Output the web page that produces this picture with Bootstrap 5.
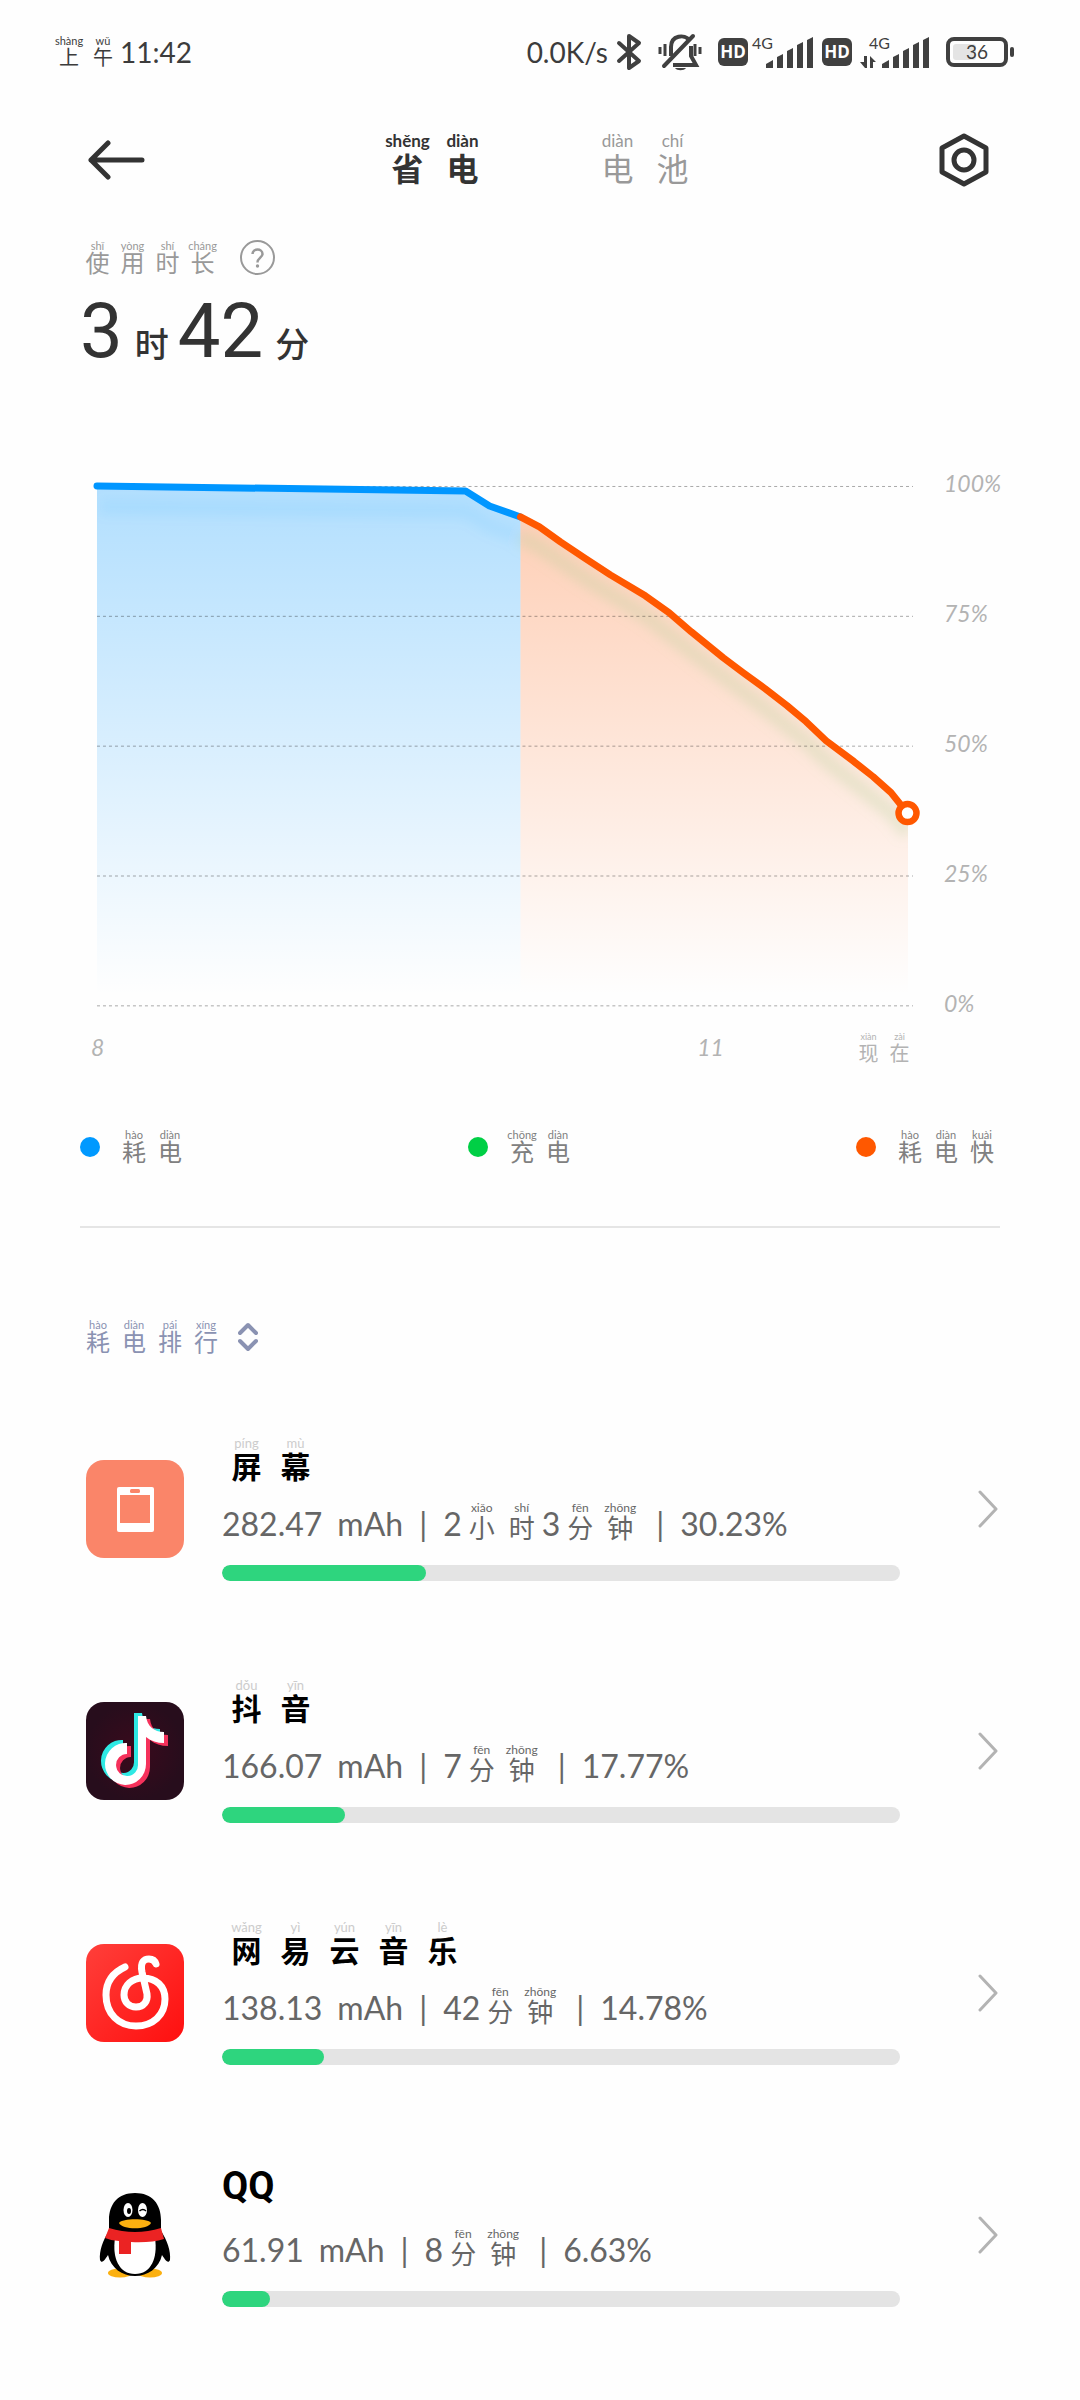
<!DOCTYPE html>
<html lang="zh-CN">
<head>
<meta charset="utf-8">
<meta name="viewport" content="width=device-width, initial-scale=1">
<title>省电</title>
<link href="https://cdn.jsdelivr.net/npm/bootstrap@5.3.0/dist/css/bootstrap.min.css" rel="stylesheet">
<style>
body{font-family:Lato,"Noto Sans CJK SC",sans-serif;color:#333;background:#fefefe;line-height:1}
svg{display:block;flex:none}
a,a:hover{text-decoration:none;color:inherit}
.bare{border:0;background:none;padding:0;color:inherit;font:inherit}
.side{padding-left:80px;padding-right:80px}

/* hanzi with pinyin above */
ruby{display:flex;flex-direction:column-reverse;align-items:center;width:36px;font-size:24px;line-height:24px}
rt{display:block;font-size:11px;line-height:10px;white-space:nowrap}
.zh-status ruby{width:34px;font-size:20px;line-height:22px}
.zh-tab ruby{width:55px;font-size:32px;line-height:38px}
.zh-tab rt{font-size:17px;line-height:18px}
.zh-usage ruby{width:35px}
.zh-axis ruby{width:31px;font-size:20px;line-height:22px}
.zh-axis rt{font-size:9px}
.zh-title ruby{width:49px;font-size:30px;line-height:34px}
.zh-title rt{font-size:13px;line-height:12px;font-weight:400;color:#ccc}
.zh-time ruby{width:40px;font-size:26px;line-height:28px}
.zh-time rt{font-size:12px;line-height:12px}

.status{height:104px;padding:0 66px 0 52px;font-size:28px;color:#3c3c3c}
.status svg{overflow:visible}
.hd-tag{width:30px;height:28px;border-radius:6px;background:#404040;color:#fff;font:700 17px/28px "Open Sans",sans-serif;text-align:center}
.topbar{height:112px;padding:0 87px}
.tabs{gap:100px}
.tab-off{color:#999}
.side-btn{width:58px}
.usage{padding-top:24px;color:#999;gap:20px}
.clock{margin-top:16px;font:400 76px/80px Roboto,sans-serif}
.clock small{font:500 34px/40px "Noto Sans CJK SC",sans-serif;margin:0 9px 0 12px}
.chart{margin-top:99px;padding-left:91px;padding-right:70px;color:#b3b3b3;font-size:23px;font-style:italic}
.plot svg{width:100%;height:auto}
.y-axis{width:66px;margin-left:22px;line-height:26px}
.x-axis{display:grid;grid-template-columns:607fr 156fr 62fr;padding-right:7px;margin-top:17px;line-height:30px}
.x-axis ruby{font-style:normal}
.x-axis .zh-axis{justify-content:flex-end}
.legend{margin-top:66px;color:#808080}
.dot{width:20px;height:20px}
.blue{background:#0099ff}.green{background:#00cf45}.orange{background:#ff5800}
.rule{margin:62px 80px 92px;border:0;border-top:2px solid #e5e5e5;opacity:1}
.sort{color:#8a92b2;gap:14px}
.rank{margin:34px 0 0}
.app{height:242px;padding:0 82px 0 86px}
.app-body{margin:0 78px 0 38px}
.app-name{height:46px;color:#000;font-weight:700}
.latin{font:700 38px/46px Roboto,sans-serif}
.detail{margin-top:19px;height:40px;font-size:32px;line-height:36px;color:#666}
.unit{margin-left:15px}
.bar-sep{width:40px;text-align:center}
.meter{height:16px;margin-top:23px;background:#e4e4e4}
.meter .progress-bar{background:#2ed57e}
</style>
<script src="https://cdn.jsdelivr.net/npm/bootstrap@5.3.0/dist/js/bootstrap.bundle.min.js"></script>
</head>
<body>

<div class="status d-flex align-items-center justify-content-between">
  <div class="d-flex align-items-center zh-status">
    <ruby>上<rt>shàng</rt></ruby><ruby>午<rt>wǔ</rt></ruby><span>11:42</span>
  </div>
  <div class="d-flex align-items-center">
    <span>0.0K/s</span>
    <svg class="ms-2" width="26" height="40" viewBox="0 0 26 40" fill="none" stroke="#404040" stroke-width="4" stroke-linejoin="round" stroke-linecap="round"><path d="M3 11 L23 29 L13 36 V4 L23 11 L3 29"/></svg>
    <svg class="ms-3" width="44" height="40" viewBox="0 0 44 40" fill="none" stroke="#404040" stroke-width="4"><path d="M2 15v7M7 12v12M37 12v12M42 15v7" stroke-width="3"/><path d="M13 24V15C13 3 27 2 31 8M33 14V24L38 33H15"/><path d="M6 34L35 4" stroke-linecap="round"/><path d="M17 36H28C26 39 19 39 17 36Z" fill="#404040" stroke="none"/></svg>
    <span class="hd-tag ms-3">HD</span>
    <svg class="ms-1" width="62" height="38" viewBox="0 -2 62 38" fill="#404040"><text x="0" y="14" font-size="16">4G</text><path d="M14 33V29L21 25V33ZM25 33V22L31 19V33ZM35 33V16L41 13V33ZM45 33V10L51 7V33ZM55 33V5L61 2V33Z"/></svg>
    <span class="hd-tag ms-2">HD</span>
    <svg class="ms-2" width="70" height="38" viewBox="0 -2 70 38" fill="#404040"><text x="9" y="14" font-size="16">4G</text><path d="M0 27H4V21H7V33H5ZM10 33V21L16 27H13V33Z"/><path d="M22 33V29L29 25V33ZM33 33V22L39 19V33ZM43 33V16L49 13V33ZM53 33V10L59 7V33ZM63 33V5L69 2V33Z"/></svg>
    <svg class="ms-3" width="68" height="30" viewBox="0 0 68 30"><rect x="2" y="2" width="58" height="26" rx="6" fill="none" stroke="#404040" stroke-width="4"/><rect x="7" y="7" width="23" height="16" rx="3" fill="#e4e4e4"/><rect x="64" y="10" width="4" height="10" rx="2" fill="#404040"/><text x="31" y="22" font-size="19" text-anchor="middle" fill="#404040">36</text></svg>
  </div>
</div>

<header class="topbar d-flex align-items-center justify-content-between">
  <button class="bare side-btn" aria-label="返回"><svg width="58" height="40" viewBox="0 0 58 40" fill="none" stroke="#333" stroke-width="5" stroke-linecap="round" stroke-linejoin="round"><path d="M55 20H4M21 3L4 20L21 37"/></svg></button>
  <nav class="tabs d-flex">
    <a href="#saver" class="zh-tab d-flex fw-bold"><ruby>省<rt>shěng</rt></ruby><ruby>电<rt>diàn</rt></ruby></a>
    <a href="#battery" class="zh-tab d-flex tab-off"><ruby>电<rt>diàn</rt></ruby><ruby>池<rt>chí</rt></ruby></a>
  </nav>
  <button class="bare side-btn d-flex justify-content-center" aria-label="设置"><svg width="50" height="54" viewBox="0 0 50 54" fill="none" stroke="#333" stroke-width="5" stroke-linejoin="round"><path d="M25 3L47 15V39L25 51L3 39V15Z"/><circle cx="25" cy="27" r="10"/></svg></button>
</header>

<main>
  <section class="side">
    <div class="usage d-flex align-items-center">
      <div class="zh-usage d-flex"><ruby>使<rt>shǐ</rt></ruby><ruby>用<rt>yòng</rt></ruby><ruby>时<rt>shí</rt></ruby><ruby>长<rt>cháng</rt></ruby></div>
      <button class="bare" aria-label="说明"><svg width="35" height="35" viewBox="0 0 35 35" fill="none" stroke="#999" stroke-width="2"><circle cx="17.500" cy="17.500" r="16.500"/><path d="M12.500 14C12.500 8 22.500 8 22.500 14C22.500 17.500 17.500 18 17.500 22.500" stroke-width="2.500"/><circle cx="17.500" cy="26" r="1.700" fill="#999" stroke="none"/></svg></button>
    </div>
    <div class="clock d-flex align-items-baseline">3<small>时</small>42<small>分</small></div>
  </section>

  <section class="chart d-flex">
    <div class="plot flex-grow-1">
      <svg viewBox="91 470 832 546" role="img" aria-label="电量曲线">
        <defs>
          <linearGradient id="gb" gradientUnits="userSpaceOnUse" x1="0" y1="486" x2="0" y2="996"><stop offset="0" stop-color="#0096ff" stop-opacity=".3"/><stop offset="1" stop-color="#0096ff" stop-opacity="0"/></linearGradient>
          <linearGradient id="go" gradientUnits="userSpaceOnUse" x1="0" y1="486" x2="0" y2="996"><stop offset="0" stop-color="#ff5800" stop-opacity=".3"/><stop offset="1" stop-color="#ff5800" stop-opacity="0"/></linearGradient>
          <filter id="soft" filterUnits="userSpaceOnUse" x="60" y="440" width="900" height="460"><feGaussianBlur stdDeviation="6"/></filter>
          <clipPath id="area"><path d="M97 486L466 491L490 506L521 517L540 527L561 542L585 558L611 575L646 596L670 613L692 632L724 658L766 689L807 722L827 741L855 762L892 793L909 814V1006H97Z"/></clipPath>
        </defs>
        <path fill="url(#gb)" d="M97 486L466 491L490 506L521 517V1006H97Z"/>
        <path fill="url(#go)" d="M521 517L540 527L561 542L585 558L611 575L646 596L670 613L692 632L724 658L766 689L807 722L827 741L855 762L892 793L909 814V1006H521Z"/>
        <g clip-path="url(#area)"><g filter="url(#soft)" fill="none" stroke-width="15" transform="translate(0 20)">
          <path stroke="#0096ff" stroke-opacity=".07" d="M100 487L466 491L490 506L521 517"/>
          <path stroke="#b0d098" stroke-opacity=".28" d="M521 517L540 527L585 558L646 596L692 632L766 689L807 722L827 741L892 793L909 814"/>
        </g></g>
        <g stroke="#000" stroke-opacity=".34" stroke-dasharray="3 3"><path d="M97 486.500H914M97 616.500H914M97 746.500H914M97 876.500H914M97 1006.500H914"/></g>
        <g fill="none" stroke-width="7" stroke-linecap="round" stroke-linejoin="round">
          <path stroke="#0096ff" d="M97 486L466 491L490 506L521 517"/>
          <path stroke="#ff5800" d="M521 517L540 527L561 542L585 558L611 575L646 596L670 613L692 632L724 658L744 673L766 689L788 706L807 722L827 741L855 762L874 777L892 793L908 813"/>
        </g>
        <circle cx="908.500" cy="813.500" r="9" fill="#fff" stroke="#ff5800" stroke-width="6.500"/>
      </svg>
      <div class="x-axis"><span>8</span><span>11</span><span class="zh-axis d-flex"><ruby>现<rt>xiàn</rt></ruby><ruby>在<rt>zài</rt></ruby></span></div>
    </div>
    <div class="y-axis flex-shrink-0"><div class="d-flex flex-column justify-content-between h-100 pb-5"><span>100%</span><span>75%</span><span>50%</span><span>25%</span><span>0%</span></div></div>
  </section>

  <section class="legend side d-flex justify-content-between">
    <div class="d-flex align-items-center gap-3"><span class="dot blue rounded-circle"></span><span class="d-flex"><ruby>耗<rt>hào</rt></ruby><ruby>电<rt>diàn</rt></ruby></span></div>
    <div class="d-flex align-items-center gap-3"><span class="dot green rounded-circle"></span><span class="d-flex"><ruby>充<rt>chōng</rt></ruby><ruby>电<rt>diàn</rt></ruby></span></div>
    <div class="d-flex align-items-center gap-3"><span class="dot orange rounded-circle"></span><span class="d-flex"><ruby>耗<rt>hào</rt></ruby><ruby>电<rt>diàn</rt></ruby><ruby>快<rt>kuài</rt></ruby></span></div>
  </section>

  <hr class="rule">

  <div class="side">
    <button class="bare sort d-flex align-items-center">
      <span class="d-flex"><ruby>耗<rt>hào</rt></ruby><ruby>电<rt>diàn</rt></ruby><ruby>排<rt>pái</rt></ruby><ruby>行<rt>xíng</rt></ruby></span>
      <svg width="20" height="30" viewBox="0 0 20 30" fill="none" stroke="#8a92b2" stroke-width="4" stroke-linecap="round" stroke-linejoin="round"><path d="M2 11L10 3L18 11M2 19L10 27L18 19"/></svg>
    </button>
  </div>

  <ul class="rank list-unstyled">
    <li><a href="#screen" class="app d-flex align-items-center">
      <svg width="98" height="98" viewBox="0 0 98 98"><rect width="98" height="98" rx="18" fill="#fa8569"/><rect x="31" y="27" width="37" height="45" rx="2" fill="#fff"/><rect x="34" y="35" width="30" height="28" fill="#fa8569"/><rect x="44" y="29" width="10" height="4" rx="1.500" fill="#fa8569"/></svg>
      <div class="app-body flex-grow-1">
        <div class="app-name zh-title d-flex"><ruby>屏<rt>píng</rt></ruby><ruby>幕<rt>mù</rt></ruby></div>
        <div class="detail zh-time d-flex align-items-end"><span>282.47</span><span class="unit">mAh</span><span class="bar-sep">|</span><span>2</span><ruby>小<rt>xiǎo</rt></ruby><ruby>时<rt>shí</rt></ruby><span>3</span><ruby>分<rt>fēn</rt></ruby><ruby>钟<rt>zhōng</rt></ruby><span class="bar-sep">|</span><span>30.23%</span></div>
        <div class="meter progress rounded-pill"><div class="progress-bar rounded-pill" style="width:30.1%"></div></div>
      </div>
      <svg width="20" height="38" viewBox="0 0 20 38" fill="none" stroke="#b3b3b3" stroke-width="3" stroke-linecap="round" stroke-linejoin="round"><path d="M2 2L18 19L2 36"/></svg>
    </a></li>
    <li><a href="#douyin" class="app d-flex align-items-center">
      <svg width="98" height="98" viewBox="0 0 98 98"><defs><radialGradient id="dk"><stop offset="0" stop-color="#3a0a1c"/><stop offset="1" stop-color="#270d1c"/></radialGradient><path id="note" d="M52 14H60C61 24 68 30 78 30V41C71 41 65 39 60 35V62A20.500 21 0 1 1 41 41V52A11 11 0 1 0 52 62Z"/></defs><rect width="98" height="98" rx="18" fill="url(#dk)"/><use href="#note" x="-4" y="-3" fill="#2ee9e4"/><use href="#note" x="4" y="3" fill="#f5315b"/><use href="#note" fill="#fff"/></svg>
      <div class="app-body flex-grow-1">
        <div class="app-name zh-title d-flex"><ruby>抖<rt>dǒu</rt></ruby><ruby>音<rt>yīn</rt></ruby></div>
        <div class="detail zh-time d-flex align-items-end"><span>166.07</span><span class="unit">mAh</span><span class="bar-sep">|</span><span>7</span><ruby>分<rt>fēn</rt></ruby><ruby>钟<rt>zhōng</rt></ruby><span class="bar-sep">|</span><span>17.77%</span></div>
        <div class="meter progress rounded-pill"><div class="progress-bar rounded-pill" style="width:18.1%"></div></div>
      </div>
      <svg width="20" height="38" viewBox="0 0 20 38" fill="none" stroke="#b3b3b3" stroke-width="3" stroke-linecap="round" stroke-linejoin="round"><path d="M2 2L18 19L2 36"/></svg>
    </a></li>
    <li><a href="#music" class="app d-flex align-items-center">
      <svg width="98" height="98" viewBox="0 0 98 98"><defs><linearGradient id="rd" x1="0" y1="0" x2="1" y2="1"><stop offset="0" stop-color="#ff3f3a"/><stop offset="1" stop-color="#ff0f0f"/></linearGradient></defs><rect width="98" height="98" rx="18" fill="url(#rd)"/><path d="M39 23C26 29 20 39 20 51C20 70 33 82 50 82C67 82 79 71 79 55C79 42 70 34 57 34C46 34 38 41 38 51C38 58 43 63 50 63C58 63 62 57 61 50L56 28C54 18 58 15 63 15C67 15 69 17 70 20" fill="none" stroke="#fff" stroke-width="7" stroke-linecap="round"/></svg>
      <div class="app-body flex-grow-1">
        <div class="app-name zh-title d-flex"><ruby>网<rt>wǎng</rt></ruby><ruby>易<rt>yì</rt></ruby><ruby>云<rt>yún</rt></ruby><ruby>音<rt>yīn</rt></ruby><ruby>乐<rt>lè</rt></ruby></div>
        <div class="detail zh-time d-flex align-items-end"><span>138.13</span><span class="unit">mAh</span><span class="bar-sep">|</span><span>42</span><ruby>分<rt>fēn</rt></ruby><ruby>钟<rt>zhōng</rt></ruby><span class="bar-sep">|</span><span>14.78%</span></div>
        <div class="meter progress rounded-pill"><div class="progress-bar rounded-pill" style="width:15.1%"></div></div>
      </div>
      <svg width="20" height="38" viewBox="0 0 20 38" fill="none" stroke="#b3b3b3" stroke-width="3" stroke-linecap="round" stroke-linejoin="round"><path d="M2 2L18 19L2 36"/></svg>
    </a></li>
    <li><a href="#qq" class="app d-flex align-items-center">
      <svg width="98" height="98" viewBox="0 0 98 98"><ellipse cx="34" cy="87" rx="12" ry="4.500" fill="#fbb010"/><ellipse cx="64" cy="87" rx="12" ry="4.500" fill="#fbb010"/><path d="M49 7C32 7 23 18 23 34V45C17 54 13 65 14 74C16 79 20 72 22 69C25 82 36 90 49 90C62 90 73 82 76 69C78 72 82 79 84 74C85 65 81 54 75 45V34C75 18 66 7 49 7Z" fill="#000"/><path d="M29 52H69C72 72 65 88 49 88C33 88 26 72 29 52Z" fill="#fff"/><ellipse cx="42" cy="24" rx="4.500" ry="7" fill="#fff"/><ellipse cx="56.500" cy="24" rx="4.500" ry="7" fill="#fff"/><ellipse cx="43" cy="25" rx="2" ry="3"/><path d="M53.500 25Q57 22 60 25" fill="none" stroke="#000" stroke-width="1.500"/><path d="M33 37C36 32 62 32 65 37C62 44 36 44 33 37Z" fill="#fbb010"/><path d="M23 42Q49 50 75 42L78 53Q65 57 45 56V68H33V55Q26 55 19 52Z" fill="#eb2323"/></svg>
      <div class="app-body flex-grow-1">
        <div class="app-name latin">QQ</div>
        <div class="detail zh-time d-flex align-items-end"><span>61.91</span><span class="unit">mAh</span><span class="bar-sep">|</span><span>8</span><ruby>分<rt>fēn</rt></ruby><ruby>钟<rt>zhōng</rt></ruby><span class="bar-sep">|</span><span>6.63%</span></div>
        <div class="meter progress rounded-pill"><div class="progress-bar rounded-pill" style="width:7.1%"></div></div>
      </div>
      <svg width="20" height="38" viewBox="0 0 20 38" fill="none" stroke="#b3b3b3" stroke-width="3" stroke-linecap="round" stroke-linejoin="round"><path d="M2 2L18 19L2 36"/></svg>
    </a></li>
  </ul>
</main>
</body>
</html>
